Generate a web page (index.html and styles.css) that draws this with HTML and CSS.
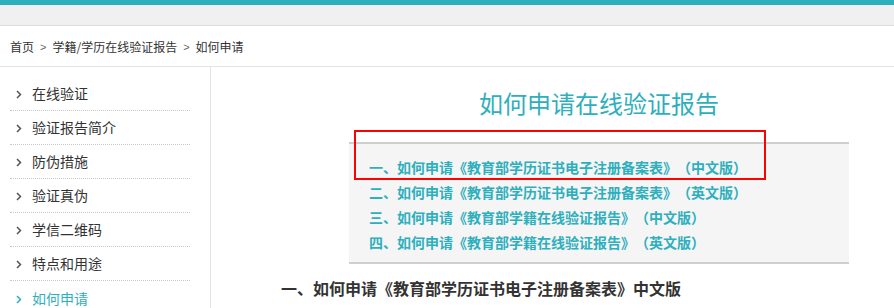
FILE: index.html
```html
<!DOCTYPE html>
<html lang="zh-CN">
<head>
<meta charset="utf-8">
<title>如何申请</title>
<link rel="stylesheet" href="styles.css">
</head>
<body>
<div class="topbar"></div>
<div class="subbar"></div>
<div class="crumbs">
  <span>首页</span><span class="sep">&gt;</span><span>学籍/学历在线验证报告</span><span class="sep">&gt;</span><span>如何申请</span>
</div>
<div class="page">
  <ul class="side">
    <li><svg class="chev" width="6" height="9" viewBox="0 0 6 9"><path d="M1 1l3.5 3.5L1 8" fill="none" stroke="currentColor" stroke-width="1.5"/></svg>在线验证</li>
    <li><svg class="chev" width="6" height="9" viewBox="0 0 6 9"><path d="M1 1l3.5 3.5L1 8" fill="none" stroke="currentColor" stroke-width="1.5"/></svg>验证报告简介</li>
    <li><svg class="chev" width="6" height="9" viewBox="0 0 6 9"><path d="M1 1l3.5 3.5L1 8" fill="none" stroke="currentColor" stroke-width="1.5"/></svg>防伪措施</li>
    <li><svg class="chev" width="6" height="9" viewBox="0 0 6 9"><path d="M1 1l3.5 3.5L1 8" fill="none" stroke="currentColor" stroke-width="1.5"/></svg>验证真伪</li>
    <li><svg class="chev" width="6" height="9" viewBox="0 0 6 9"><path d="M1 1l3.5 3.5L1 8" fill="none" stroke="currentColor" stroke-width="1.5"/></svg>学信二维码</li>
    <li><svg class="chev" width="6" height="9" viewBox="0 0 6 9"><path d="M1 1l3.5 3.5L1 8" fill="none" stroke="currentColor" stroke-width="1.5"/></svg>特点和用途</li>
    <li class="active"><svg class="chev" width="6" height="9" viewBox="0 0 6 9"><path d="M1 1l3.5 3.5L1 8" fill="none" stroke="currentColor" stroke-width="1.5"/></svg>如何申请</li>
  </ul>
  <div class="main">
    <div class="center">
      <h1 class="title">如何申请在线验证报告</h1>
      <div class="toc">
        <div class="mark"></div>
        <p class="toc-item">一、如何申请《教育部学历证书电子注册备案表》（中文版）</p>
        <p class="toc-item">二、如何申请《教育部学历证书电子注册备案表》（英文版）</p>
        <p class="toc-item">三、如何申请《教育部学籍在线验证报告》（中文版）</p>
        <p class="toc-item">四、如何申请《教育部学籍在线验证报告》（英文版）</p>
      </div>
    </div>
    <h2 class="sec">一、如何申请《教育部学历证书电子注册备案表》中文版</h2>
  </div>
</div>
</body>
</html>
```
FILE: styles.css
```css
* { box-sizing: border-box; }
html, body { margin: 0; padding: 0; }
body {
  background: #fff;
  font-family: "Noto Sans CJK SC", "Liberation Sans", sans-serif;
  color: #333;
  overflow: hidden;
}
.topbar { height: 5px; background: #2eafbd; }
.subbar { height: 21px; background: #f0f0f0; border-bottom: 1px solid #dedede; }
.crumbs {
  height: 41px;
  border-bottom: 1px solid #e3e3e3;
  padding: 0 10px;
  display: flex;
  align-items: center;
  font-size: 12px;
  color: #333;
  padding-top: 1px;
}
.crumbs .sep { color: #666; font-size: 11px; margin: 0 6px; font-family: "Liberation Sans", sans-serif; }
.page { display: flex; }
.side {
  list-style: none;
  margin: 0;
  width: 211px;
  padding: 10px 20px 0 10px;
  border-right: 1px solid #e3e3e3;
  flex: none;
}
.side li {
  height: 34px;
  line-height: 35px;
  border-bottom: 1px dotted #c8c8c8;
  font-size: 14px;
  color: #333;
  display: flex;
  align-items: center;
  padding-left: 6px;
}
.side li .chev { color: #555; margin-right: 10px; margin-top: 2px; }
.side li.active { color: #2eafbd; border-bottom: none; }
.side li.active .chev { color: #2eafbd; }
.main { flex: 1; padding-left: 70px; }
.center { width: 500px; margin-left: 68px; }
.title {
  margin: 20px 0 0;
  height: 55px;
  font-size: 24px;
  line-height: 32px;
  font-weight: normal;
  color: #2eafbd;
  text-align: center;
}
.toc {
  position: relative;
  background: #f5f5f5;
  border-top: 2px solid #cfcfcf;
  border-bottom: 2px solid #cfcfcf;
  padding: 11px 20px 7px;
}
.toc-item {
  margin: 0;
  font-size: 14px;
  line-height: 25px;
  font-weight: bold;
  color: #2eafbd;
  text-spacing-trim: space-all;
}
.mark {
  position: absolute;
  left: 5px;
  top: -14px;
  width: 412px;
  height: 50px;
  border: 2px solid #f00;
}
.sec {
  margin: 11px 0 0;
  font-size: 16px;
  line-height: 26px;
  font-weight: bold;
  color: #333;
}
```
